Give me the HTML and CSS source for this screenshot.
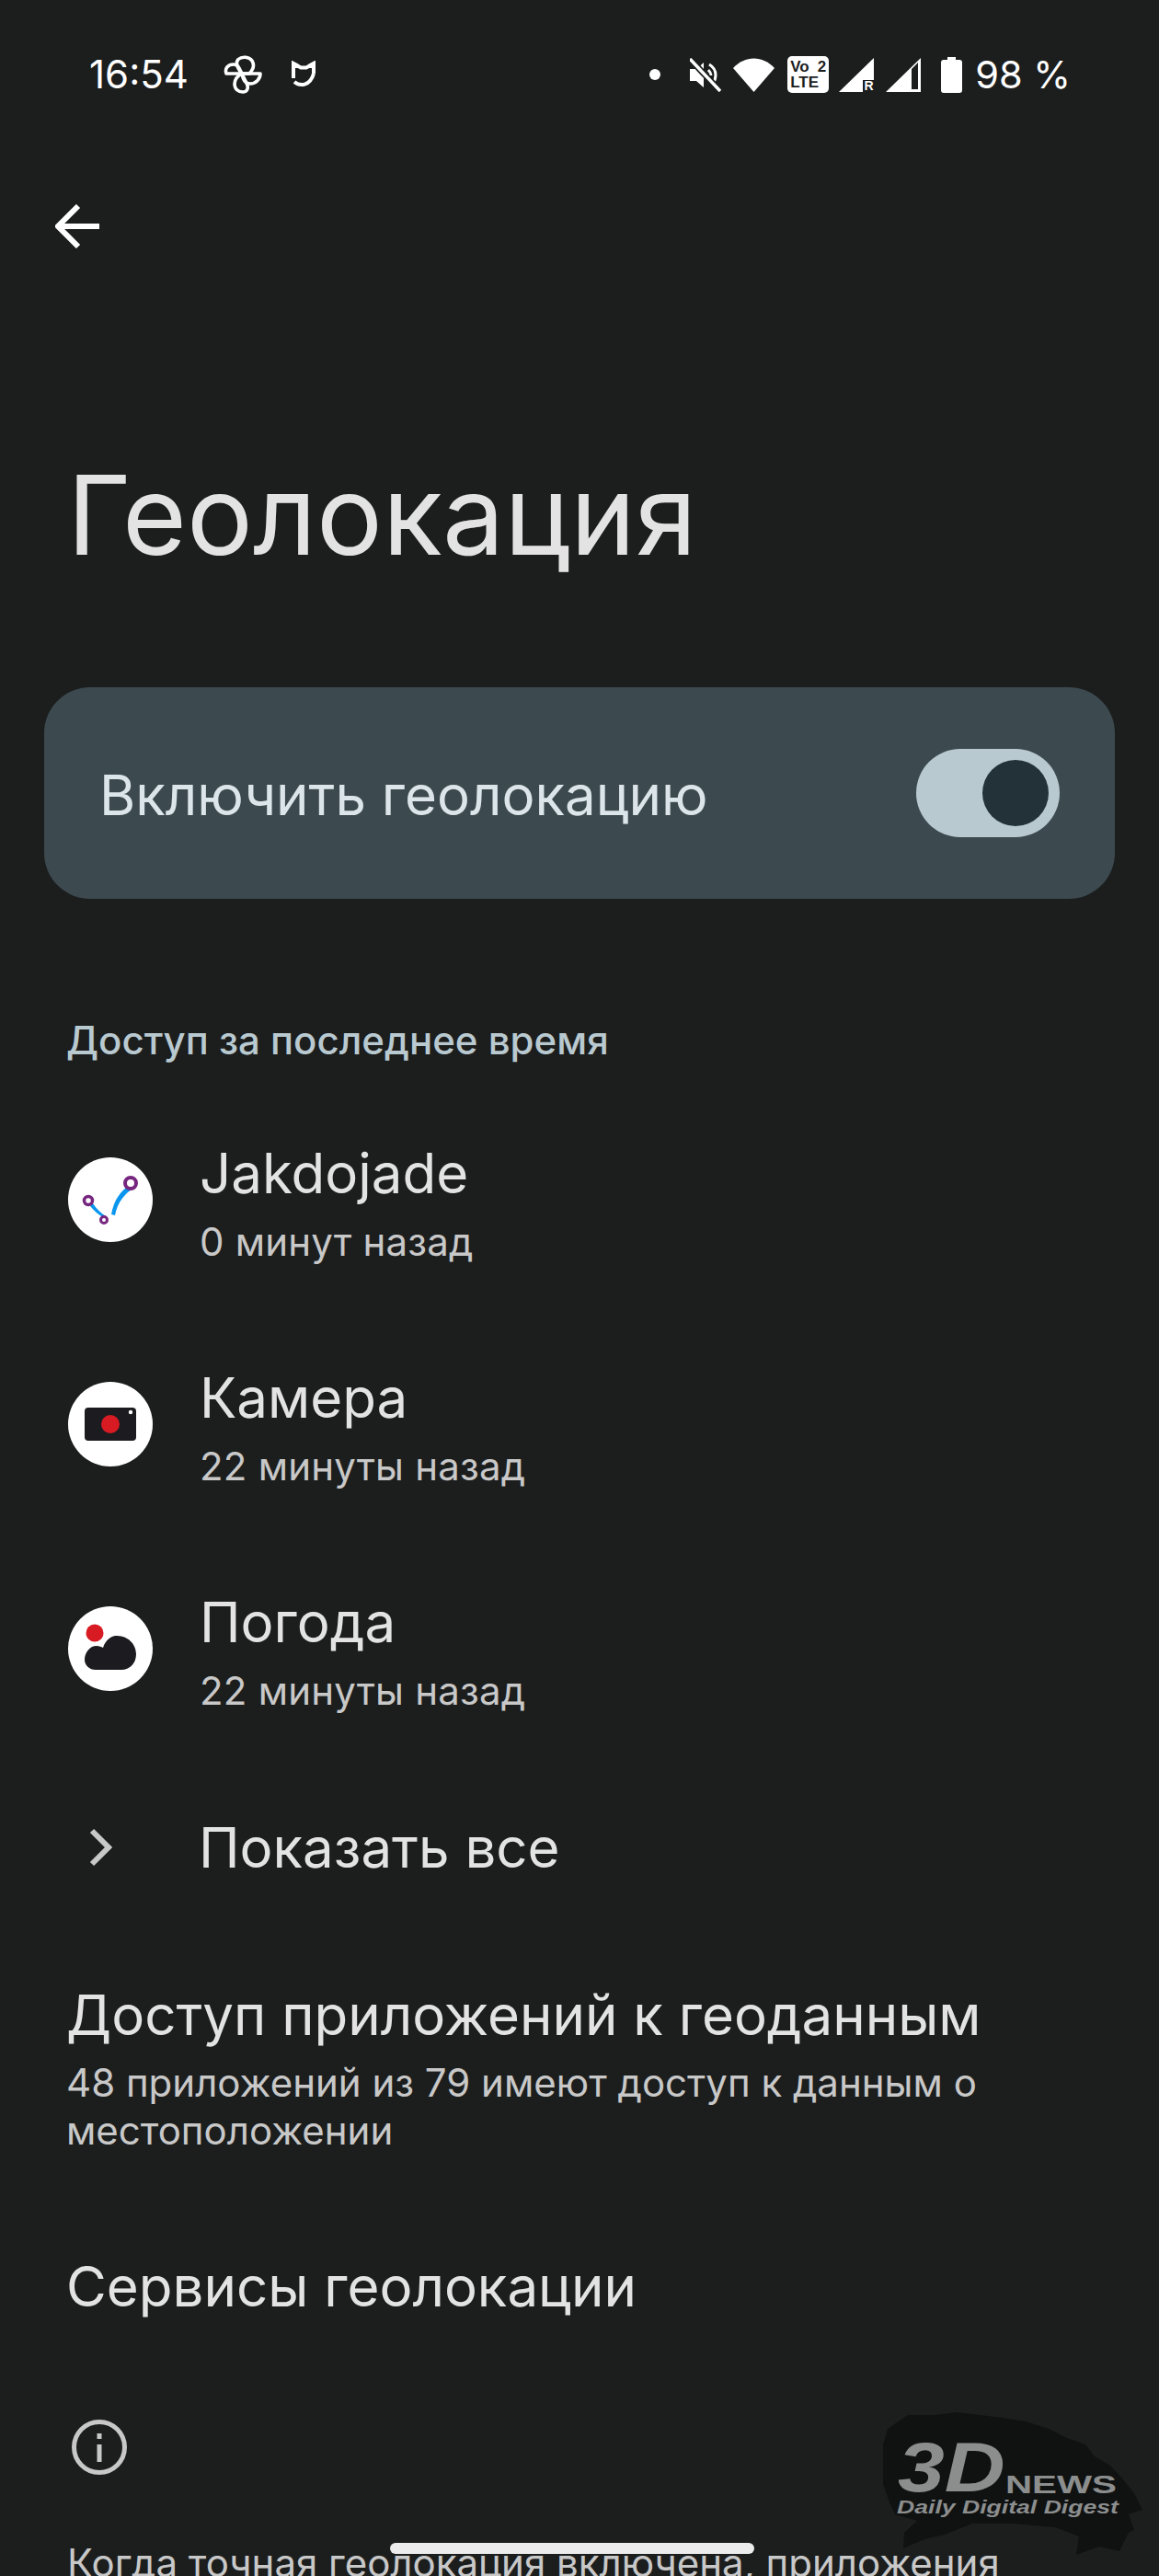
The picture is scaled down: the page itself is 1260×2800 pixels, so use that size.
FILE: index.html
```html
<!DOCTYPE html>
<html lang="ru">
<head>
  <meta charset="UTF-8">
  <title>Геолокация</title>
  <link rel="stylesheet" href="styles.css">
</head>
<body>
  <div class="screen">
    <div class="status-bar">
      <div class="status-left">
        <span class="clock">16:54</span>
        <svg class="ic-fan" viewBox="0 0 42 42" fill="none" stroke="#fff" stroke-width="3.6" stroke-linejoin="round">
          <path d="M20 20C15 14 13 8 16 4.500C20 1 28 1.500 31 6C34 11 32 16 28 20Z"/>
          <path d="M20 20H3C1 14 5 10 11 10C14 10 16 12 17 14Z"/>
          <path d="M20 20H40C40 26 35 31 29 31C24 31 21 26 20 20Z"/>
          <path d="M20 20C15 22 12 27 12 31C12 37 16 40 21 40C25 40 27 37 26 33C25 29 22 25 20 20Z"/>
        </svg>
        <svg class="ic-mi" viewBox="0 0 26 30" fill="none" stroke="#fff" stroke-width="4">
          <path d="M2 19V3L10 7.500H16L24 3V14"/>
          <path d="M3 23C9 28 20 28 24 14"/>
          <path d="M0 0L8 4V8H2ZM26 0L18 4V8H26Z" fill="#fff" stroke="none"/>
        </svg>
      </div>
      <div class="status-right">
        <span class="dot"></span>
        <svg class="ic-mute" viewBox="0 0 34 37" fill="#fff">
          <path d="M0 12H7L15 5V32L7 25H0Z"/>
          <path d="M21 7C26 10 28 14 28 18.500C28 22 27 25 25 27.500" fill="none" stroke="#fff" stroke-width="3"/>
          <path d="M20 13C22 15 23 17 23 19" fill="none" stroke="#fff" stroke-width="3"/>
          <path d="M0 1L33 36" stroke="#1c1e1e" stroke-width="7"/>
          <path d="M0 1L33 36" stroke="#fff" stroke-width="3.500"/>
        </svg>
        <svg class="ic-wifi" viewBox="0 0 45 37" fill="#fff">
          <path d="M0 11C13 -3 32 -3 45 11L22.500 37Z"/>
        </svg>
        <span class="volte">
          <span class="volte-row"><span>Vo</span><span>2</span></span>
          <span class="volte-row"><span>LTE</span></span>
        </span>
        <span class="signal">
          <svg class="ic-signal" viewBox="0 0 38 37" fill="#fff">
            <path d="M0 37L38 0V37Z"/>
          </svg>
          <span class="roaming">R</span>
        </span>
        <svg class="ic-signal" viewBox="0 0 38 37" fill="#fff" fill-rule="evenodd">
          <path d="M0 37L38 0V37ZM28 12V34H35V5Z"/>
        </svg>
        <svg class="ic-battery" viewBox="0 0 23 39" fill="#fff">
          <path d="M7 0H16V3H20C22 3 23 4 23 6V36C23 38 22 39 20 39H3C1 39 0 38 0 36V6C0 4 1 3 3 3H7Z"/>
        </svg>
        <span class="battery-text">98 %</span>
      </div>
    </div>

    <div class="toolbar">
      <svg class="ic-back" viewBox="0 0 48 48" fill="none" stroke="#fff" stroke-width="6">
        <path d="M48 24H3"/>
        <path d="M25 2L3 24L25 46"/>
      </svg>
    </div>

    <h1 class="page-title">Геолокация</h1>

    <div class="main-switch">
      <span class="main-switch-label">Включить геолокацию</span>
      <span class="toggle"><span class="knob"></span></span>
    </div>

    <div class="section-title">Доступ за последнее время</div>

    <div class="app-row">
      <span class="app-icon">
        <svg viewBox="0 0 92 92" width="92" height="92">
          <path d="M47 62C50 46 57 36 69 29L72 33C62 39 54 48 51 63Z" fill="#0a96ee"/>
          <path d="M27 50C31 56 35 60 41 64L39 66C33 62 28 58 24 53Z" fill="#0a96ee"/>
          <circle cx="68" cy="28" r="6" fill="#fff" stroke="#76267f" stroke-width="4"/>
          <circle cx="22" cy="47" r="4.500" fill="#fff" stroke="#76267f" stroke-width="3.500"/>
          <circle cx="39" cy="68" r="3.500" fill="#fff" stroke="#76267f" stroke-width="3"/>
        </svg>
      </span>
      <div class="app-text">
        <div class="app-name">Jakdojade</div>
        <div class="app-sub">0 минут назад</div>
      </div>
    </div>
    <div class="app-row">
      <span class="app-icon">
        <svg viewBox="0 0 92 92" width="92" height="92">
          <rect x="18" y="28" width="56" height="36" rx="4" fill="#1c1c20"/>
          <circle cx="46" cy="46" r="10" fill="#d81a23"/>
          <circle cx="68" cy="33" r="2.200" fill="#fff"/>
        </svg>
      </span>
      <div class="app-text">
        <div class="app-name">Камера</div>
        <div class="app-sub">22 минуты назад</div>
      </div>
    </div>
    <div class="app-row">
      <span class="app-icon">
        <svg viewBox="0 0 92 92" width="92" height="92">
          <circle cx="29" cy="29" r="9.500" fill="#d81a23"/>
          <path d="M30 69C23 69 18 64 18 58C18 51 23 43 31 43C34 43 36 44 38 45C41 36 47 32 53 32C65 32 74 41 74 52C74 62 67 69 58 69Z" fill="#1c1c20"/>
        </svg>
      </span>
      <div class="app-text">
        <div class="app-name">Погода</div>
        <div class="app-sub">22 минуты назад</div>
      </div>
    </div>

    <div class="show-all">
      <svg class="ic-chevron" viewBox="0 0 26 42" fill="none" stroke="#c8c8c8" stroke-width="6">
        <path d="M3 3L21 21L3 39"/>
      </svg>
      <span class="app-name">Показать все</span>
    </div>

    <div class="pref">
      <div class="pref-title">Доступ приложений к геоданным</div>
      <div class="pref-sub">48 приложений из 79 имеют доступ к данным о местоположении</div>
    </div>

    <div class="pref pref-services">
      <div class="pref-title">Сервисы геолокации</div>
    </div>

    <svg class="ic-info" viewBox="0 0 60 60" fill="none" stroke="#c8c8c8">
      <circle cx="30" cy="30" r="27.500" stroke-width="5"/>
      <path d="M30 27V46" stroke-width="5"/>
      <path d="M30 15V21" stroke-width="5"/>
    </svg>

    <p class="footer-text">Когда точная геолокация включена, приложения</p>

    <div class="watermark">
      <svg class="brush" viewBox="0 0 300 160" fill="#101212">
        <path d="M15 37L20 20L42 5L70 5L95 2L145 8L170 12L195 20L215 30L235 37L245 50L262 60L275 74L288 90L297 108L282 113L288 130L282 133L272 153L250 148L225 157L228 137L202 127L155 123L112 123L82 135L60 140L37 150L38 133L52 120L28 113L22 100L15 80Z"/>
      </svg>
      <span class="logo-3d">3D</span>
      <span class="logo-news">NEWS</span>
      <span class="logo-sub">Daily Digital Digest</span>
    </div>

    <div class="nav-handle"></div>
  </div>
</body>
</html>
```

FILE: styles.css
```css
* {
  box-sizing: border-box;
}

body {
  margin: 0;
  background-color: #1c1e1e;
  font-family: Inter, "Noto Sans", sans-serif;
  color: #e3e3e3;
}

.screen {
  position: relative;
  width: 1260px;
  height: 2800px;
  overflow: hidden;
}

svg {
  display: block;
  flex: none;
}

/* status bar */
.status-bar {
  height: 160px;
  padding: 60px 96px 0 97px;
  display: flex;
  justify-content: space-between;
  align-items: flex-start;
  color: #fff;
}

.status-left,
.status-right {
  height: 42px;
  display: flex;
  align-items: center;
}

.clock {
  width: 146px;
  font-size: 42px;
  line-height: 42px;
}

.ic-fan {
  width: 42px;
  height: 42px;
  margin-right: 32px;
}

.ic-mi {
  width: 26px;
  height: 30px;
}

.dot {
  width: 12px;
  height: 12px;
  border-radius: 50%;
  background: #fff;
  margin-right: 32px;
}

.ic-mute {
  width: 34px;
  height: 37px;
  margin-right: 13px;
}

.ic-wifi {
  width: 45px;
  height: 37px;
  margin-right: 14px;
}

.volte {
  width: 45px;
  height: 40px;
  margin-right: 11px;
  padding: 3px 3px 0;
  border-radius: 5px;
  background: #fff;
  color: #1c1e1e;
  font-family: "Liberation Sans Narrow", "Liberation Sans", sans-serif;
  font-size: 17px;
  font-weight: 700;
  line-height: 17px;
}

.volte-row {
  display: flex;
  justify-content: space-between;
}

.signal {
  position: relative;
  margin-right: 13px;
}

.ic-signal {
  width: 38px;
  height: 37px;
}

.roaming {
  position: absolute;
  right: -1px;
  bottom: 0;
  width: 13px;
  height: 13px;
  background: #1c1e1e;
  font-family: "Liberation Sans", sans-serif;
  font-size: 14px;
  font-weight: 700;
  line-height: 13px;
  text-align: center;
}

.status-right .ic-signal {
  margin-right: 22px;
}

.signal .ic-signal {
  margin-right: 0;
}

.ic-battery {
  width: 23px;
  height: 39px;
  margin-right: 14px;
}

.battery-text {
  font-size: 41.5px;
  line-height: 42px;
}

/* header */
.toolbar {
  height: 180px;
  padding: 62px 0 0 60px;
}

.ic-back {
  width: 48px;
  height: 48px;
}

.page-title {
  margin: 0;
  height: 407px;
  padding: 152px 0 0 73px;
  font-size: 120px;
  font-weight: 400;
  line-height: 136px;
}

/* main switch */
.main-switch {
  height: 230px;
  margin: 0 48px;
  padding: 0 60px;
  border-radius: 50px;
  background: #3c494f;
  display: flex;
  justify-content: space-between;
  align-items: center;
}

.main-switch-label {
  padding-top: 4px;
  font-size: 60px;
  color: #dce6ea;
}

.toggle {
  width: 156px;
  height: 96px;
  padding: 12px;
  border-radius: 48px;
  background: #b9c9d0;
  display: flex;
  justify-content: flex-end;
}

.knob {
  width: 72px;
  height: 72px;
  border-radius: 50%;
  background: #233138;
}

.section-title {
  height: 205px;
  padding: 129px 0 0 72px;
  font-size: 42px;
  font-weight: 500;
  line-height: 50px;
  color: #b9c9d0;
}

/* recent apps */
.app-row {
  height: 244px;
  padding-left: 74px;
  display: flex;
  align-items: center;
  gap: 51px;
}

.app-icon {
  width: 92px;
  height: 92px;
  border-radius: 50%;
  background: #fff;
}

.app-text {
  padding-top: 8px;
}

.app-name {
  font-size: 60px;
  line-height: 70px;
  color: #e3e3e3;
}

.app-sub {
  margin-top: 14px;
  font-size: 42px;
  line-height: 52px;
  letter-spacing: 0.2px;
  color: #c8c8c8;
}

.show-all {
  height: 188px;
  padding-left: 97px;
  display: flex;
  align-items: center;
  gap: 93px;
}

.ic-chevron {
  width: 26px;
  height: 42px;
}

/* preference rows */
.pref {
  padding-left: 72px;
  margin-top: 53px;
}

.pref-title {
  font-size: 60px;
  line-height: 70px;
}

.pref-sub {
  width: 1080px;
  margin-top: 13px;
  font-size: 42px;
  line-height: 52px;
  color: #c8c8c8;
}

.pref-services {
  margin-top: 108px;
}

.ic-info {
  width: 60px;
  height: 60px;
  margin: 110px 0 0 78px;
}

.footer-text {
  margin: 70px 0 0 73px;
  font-size: 42px;
  line-height: 52px;
  color: #c8c8c8;
  white-space: nowrap;
}

/* things drawn over the page */
.watermark {
  position: absolute;
  left: 945px;
  top: 2620px;
  width: 300px;
  height: 160px;
  font-family: "Liberation Sans", sans-serif;
  font-weight: 700;
  color: #8c8e8e;
}

.brush {
  position: absolute;
  left: 0;
  top: 0;
  width: 300px;
  height: 160px;
}

.logo-3d,
.logo-news,
.logo-sub {
  position: absolute;
  white-space: nowrap;
  transform-origin: left top;
}

.logo-3d {
  left: 31px;
  top: 29px;
  font-size: 76px;
  font-style: italic;
  line-height: 66px;
  transform: scaleX(1.2);
}

.logo-news {
  left: 148px;
  top: 68px;
  font-size: 28px;
  line-height: 26px;
  transform: scaleX(1.44);
}

.logo-sub {
  left: 30px;
  top: 95px;
  font-size: 20px;
  font-style: italic;
  line-height: 20px;
  transform: scaleX(1.33);
}

.nav-handle {
  position: absolute;
  left: 424px;
  top: 2764px;
  width: 396px;
  height: 12px;
  border-radius: 6px;
  background: #ececec;
}
```
